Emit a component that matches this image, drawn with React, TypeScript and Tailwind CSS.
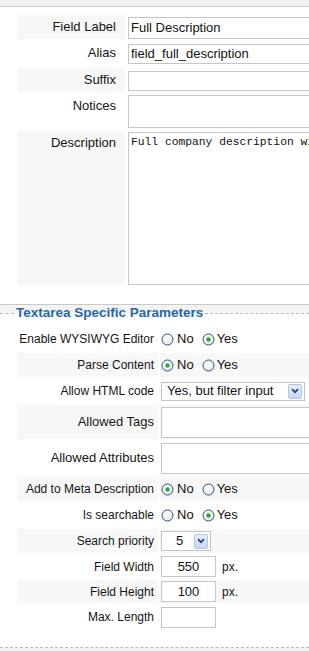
import clsx from "clsx";
import type { ReactNode } from "react";

const font = "font-['Liberation_Sans',Arial,sans-serif]";

function Radio({ checked }: { checked?: boolean }) {
  return (
    <svg width="13" height="13" viewBox="0 0 13 13" className="shrink-0">
      <defs>
        <radialGradient id="rfill" cx="0.4" cy="0.35" r="0.7">
          <stop offset="0" stopColor="#ffffff" />
          <stop offset="1" stopColor="#dfe6ee" />
        </radialGradient>
      </defs>
      <circle cx="6.5" cy="6.5" r="5.5" fill="url(#rfill)" stroke="#2f4f75" strokeWidth="1" />
      {checked && <circle cx="6.5" cy="6.5" r="2.2" fill="#36a83a" />}
    </svg>
  );
}

function RadioPair({ value }: { value: "no" | "yes" }) {
  return (
    <div className="flex items-center text-[13px] text-[#111]">
      <Radio checked={value === "no"} />
      <span className="ml-[3px]">No</span>
      <span className="ml-[8px]">
        <Radio checked={value === "yes"} />
      </span>
      <span className="ml-[2px]">Yes</span>
    </div>
  );
}

function DropButton() {
  return (
    <div className="flex h-[15px] w-[14px] items-center justify-center rounded-[2px] border border-[#b3c8e8] bg-gradient-to-b from-[#e4eefb] to-[#c6d8f3]">
      <svg width="8" height="6" viewBox="0 0 8 6">
        <path d="M1 1.2 L4 4.2 L7 1.2" fill="none" stroke="#2c4670" strokeWidth="1.8" />
      </svg>
    </div>
  );
}

function FakeSelect({ text, className, textClass }: { text: string; className: string; textClass: string }) {
  return (
    <div className={clsx("flex items-center border border-[#c4c4c4] bg-white pr-[2px] text-[13px] text-[#111]", className)}>
      <span className={clsx("flex-1", textClass)}>{text}</span>
      <DropButton />
    </div>
  );
}

function TopRow({
  label,
  shaded,
  rowH,
  children,
}: {
  label: string;
  shaded?: boolean;
  rowH: string;
  children: ReactNode;
}) {
  return (
    <>
      <div
        className={clsx(
          "pr-[9px] pt-[4px] text-right text-[13px] leading-[16px] text-[#151515]",
          rowH,
          shaded && "bg-[#f7f7f7]",
        )}
      >
        {label}
      </div>
      <div className={rowH}>{children}</div>
    </>
  );
}

function ParamRow({
  label,
  shaded,
  rowH,
  big,
  children,
}: {
  label: string;
  shaded?: boolean;
  rowH: string;
  big?: boolean;
  children: ReactNode;
}) {
  return (
    <>
      <div
        className={clsx(
          "flex items-center justify-end pr-[4px] text-[#151515]",
          big ? "text-[13px]" : "text-[12px]",
          rowH,
          shaded && "bg-[#f7f7f7]",
        )}
      >
        {label}
      </div>
      <div className={clsx("flex items-center pl-[1px]", rowH, shaded && "bg-[#f7f7f7]")}>{children}</div>
    </>
  );
}

// no font size here, each field sets its own
const boxInput = "border border-[#c6c6c6] bg-white text-[#111] outline-none";

export default function App() {
  return (
    <div className={clsx("min-h-screen w-full overflow-hidden bg-[#f2f2f2]", font)}>
      <div className="h-[6px]" />

      {/* general field settings */}
      <div className="border-y border-[#c9c9c9] bg-white pb-[19px] pl-[17px] pt-[8px]">
        <div className="grid grid-cols-[108px_420px] gap-x-[3px] gap-y-[2px]">
          <TopRow label="Field Label" shaded rowH="h-[24px]">
            <input
              readOnly
              defaultValue="Full Description"
              className={clsx(boxInput, "h-[22px] w-[420px] border-[#a9b9cb] bg-[#d9ebfd] px-[2px] text-[13px]")}
            />
          </TopRow>
          <TopRow label="Alias" rowH="h-[25px]">
            <input
              readOnly
              defaultValue="field_full_description"
              className={clsx(boxInput, "mt-[2px] h-[20px] w-[420px] px-[2px] text-[13px]")}
            />
          </TopRow>
          <TopRow label="Suffix" shaded rowH="h-[24px]">
            <input readOnly defaultValue="" className={clsx(boxInput, "mt-[2px] h-[20px] w-[420px] px-[2px] text-[13px]")} />
          </TopRow>
          <TopRow label="Notices" rowH="h-[35px]">
            <textarea readOnly defaultValue="" className={clsx(boxInput, "mt-[1px] block h-[33px] w-[420px] resize-none text-[13px]")} />
          </TopRow>
          <TopRow label="Description" shaded rowH="h-[154px]">
            <textarea
              readOnly
              defaultValue="Full company description will be shown here"
              className={clsx(
                boxInput,
                "mt-[1px] block h-[153px] w-[420px] resize-none px-[2px] pt-[2px] font-['Liberation_Mono','Courier_New',monospace] text-[11.3px] leading-[14px]",
              )}
            />
          </TopRow>
        </div>
      </div>

      {/* legend */}
      <div className="flex h-[16px] items-center bg-[linear-gradient(#f4f4f4_50%,#ffffff_50%)]">
        <div className="h-0 w-[14px] border-t border-dashed border-[#b9b9b9]" />
        <span className="px-[2px] text-[13.5px] font-bold leading-[16px] text-[#2467a8]">
          Textarea Specific Parameters
        </span>
        <div className="h-0 flex-1 border-t border-dashed border-[#b9b9b9]" />
      </div>

      <div className="border-b border-dashed border-[#b9b9b9] bg-white pb-[18px] pl-[17px] pt-[6px]">
        <div className="grid grid-cols-[141px_1fr] gap-[2px]">
          <ParamRow label="Enable WYSIWYG Editor" rowH="h-[24px]">
            <RadioPair value="yes" />
          </ParamRow>
          <ParamRow label="Parse Content" shaded rowH="h-[24px]">
            <RadioPair value="no" />
          </ParamRow>
          <ParamRow label="Allow HTML code" rowH="h-[24px]">
            <FakeSelect text="Yes, but filter input" className="h-[19px] w-[144px]" textClass="pl-[5px]" />
          </ParamRow>
          <ParamRow label="Allowed Tags" shaded big rowH="h-[34px]">
            <input readOnly defaultValue="" className={clsx(boxInput, "h-[31px] w-[300px] text-[13px]")} />
          </ParamRow>
          <ParamRow label="Allowed Attributes" big rowH="h-[34px]">
            <input readOnly defaultValue="" className={clsx(boxInput, "h-[31px] w-[300px] text-[13px]")} />
          </ParamRow>
          <ParamRow label="Add to Meta Description" shaded rowH="h-[24px]">
            <RadioPair value="no" />
          </ParamRow>
          <ParamRow label="Is searchable" rowH="h-[24px]">
            <RadioPair value="yes" />
          </ParamRow>
          <ParamRow label="Search priority" shaded rowH="h-[24px]">
            <FakeSelect text="5" className="h-[20px] w-[50px]" textClass="pl-[14px]" />
          </ParamRow>
          <ParamRow label="Field Width" rowH="h-[23px]">
            <input readOnly defaultValue="550" className={clsx(boxInput, "h-[21px] w-[55px] text-center text-[13px]")} />
            <span className="ml-[6px] text-[12px] text-[#151515]">px.</span>
          </ParamRow>
          <ParamRow label="Field Height" shaded rowH="h-[23px]">
            <input readOnly defaultValue="100" className={clsx(boxInput, "h-[21px] w-[55px] text-center text-[13px]")} />
            <span className="ml-[6px] text-[12px] text-[#151515]">px.</span>
          </ParamRow>
          <ParamRow label="Max. Length" rowH="h-[24px]">
            <input readOnly defaultValue="" className={clsx(boxInput, "h-[21px] w-[55px] text-[13px]")} />
          </ParamRow>
        </div>
      </div>
    </div>
  );
}
